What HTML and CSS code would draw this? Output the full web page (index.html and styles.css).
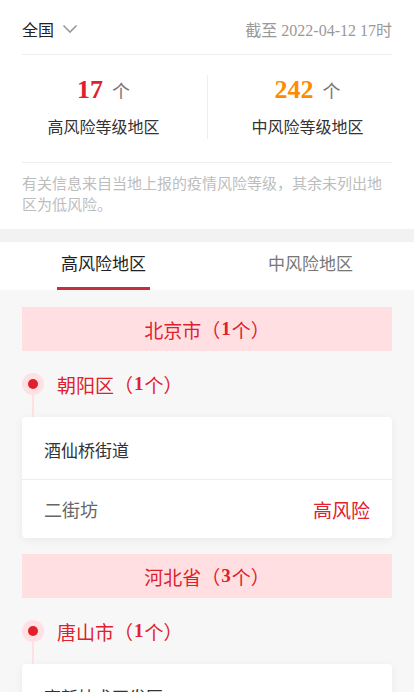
FILE: index.html
```html
<!DOCTYPE html>
<html lang="zh">
<head>
<meta charset="utf-8">
<link rel="stylesheet" href="styles.css">
</head>
<body>
<div class="top">
  <div class="topbar">
    <div class="region">全国
      <svg class="chev" width="16" height="10" viewBox="0 0 16 10"><path d="M1.5 1.5 L8 8 L14.5 1.5" fill="none" stroke="#999" stroke-width="1.6"/></svg>
    </div>
    <div class="date">截至 2022-04-12 17时</div>
  </div>
  <div class="stats">
    <div class="stat">
      <div class="num"><b class="high">17</b><span class="unit">个</span></div>
      <div class="label">高风险等级地区</div>
    </div>
    <div class="stat">
      <div class="num"><b class="mid">242</b><span class="unit">个</span></div>
      <div class="label">中风险等级地区</div>
    </div>
  </div>
  <p class="note">有关信息来自当地上报的疫情风险等级，其余未列出地区为低风险。</p>
</div>
<div class="band"></div>
<div class="tabs">
  <div class="tab active"><span>高风险地区</span></div>
  <div class="tab"><span>中风险地区</span></div>
</div>
<div class="list">
  <div class="prov">北京市（<b>1</b>个）</div>
  <div class="city"><span class="dot"></span>朝阳区（<b>1</b>个）</div>
  <div class="card">
    <div class="row first">酒仙桥街道</div>
    <div class="row"><span class="addr">二街坊</span><span class="lvl">高风险</span></div>
  </div>
  <div class="prov">河北省（<b>3</b>个）</div>
  <div class="city"><span class="dot"></span>唐山市（<b>1</b>个）</div>
  <div class="card">
    <div class="row first">高新技术开发区</div>
  </div>
</div>
</body>
</html>
```
FILE: styles.css
```css
* { box-sizing: border-box; }
html, body { margin: 0; padding: 0; }
body {
  width: 414px;
  font-family: "Liberation Serif", "Noto Sans CJK SC", sans-serif;
  background: #f7f7f7;
  color: #333;
  overflow: hidden;
}
.top { background: #fff; padding: 0 22px; }
.topbar {
  height: 55px;
  display: flex;
  align-items: center;
  justify-content: space-between;
  border-bottom: 1px solid #eeeeee;
  padding-top: 3px;
}
.region { font-size: 16px; color: #222; display: flex; align-items: center; }
.chev { margin-left: 8px; margin-top: 1px; }
.date { font-size: 16px; color: #999; }
.stats {
  display: flex;
  margin: 0 -15px 0 -22px;
  padding: 20px 0 23px;
}
.stat {
  flex: 1;
  text-align: center;
}
.stat:first-child { border-right: 1px solid #eeeeee; flex: 0 0 208px; }
.num { height: 30px; line-height: 30px; }
.num b { font-size: 26px; font-weight: bold; }
.high { color: #e0202c; }
.mid { color: #ff8a00; }
.unit { font-size: 18px; color: #777; margin-left: 9px; }
.label { font-size: 16px; color: #333; margin-top: 12px; line-height: 22px; }
.note {
  margin: 0;
  border-top: 1px solid #eeeeee;
  padding: 11px 0 13px;
  font-size: 15px;
  line-height: 21px;
  color: #bdbdbd;
}
.band { height: 13px; background: #f2f2f2; }
.tabs { display: flex; background: #fff; height: 48px; }
.tab {
  flex: 1;
  display: flex;
  justify-content: center;
}
.tab span {
  font-size: 17px;
  color: #777;
  line-height: 45px;
  border-bottom: 3px solid transparent;
  width: 93px;
  text-align: center;
}
.tab.active span { color: #222; border-bottom-color: #c4303a; }
.list { padding: 17px 22px 0; }
.prov {
  height: 44px;
  background: #ffdfe2;
  color: #e0202c;
  font-size: 19px;
  display: flex;
  align-items: center;
  justify-content: center;
}
.prov b, .city b { font-size: 19px; font-weight: bold; margin: 0 1px; }
.city {
  display: flex;
  align-items: center;
  height: 66px;
  color: #e0202c;
  font-size: 19px;
  padding-left: 35px;
  position: relative;
}
.dot {
  position: absolute;
  left: 0;
  top: 22px;
  width: 22px;
  height: 22px;
  border-radius: 50%;
  background: #ffe1e4;
}
.dot::before {
  content: "";
  position: absolute;
  left: 6px; top: 6px;
  width: 10px; height: 10px;
  border-radius: 50%;
  background: #e0202c;
}
.dot::after {
  content: "";
  position: absolute;
  left: 10px;
  top: 22px;
  width: 2px;
  height: 22px;
  background: #ffdfe2;
}
.card {
  background: #fff;
  border-radius: 4px;
  box-shadow: 0 2px 10px rgba(0,0,0,0.06);
  margin-bottom: 16px;
}
.row {
  display: flex;
  justify-content: space-between;
  align-items: center;
  padding: 0 22px;
  height: 58px;
  font-size: 18px;
  color: #666;
}
.row.first { height: 63px; color: #333; font-size: 17px; border-bottom: 1px solid #eeeeee; padding-top: 3px; }
.lvl { color: #e0202c; font-size: 19px; }
```
